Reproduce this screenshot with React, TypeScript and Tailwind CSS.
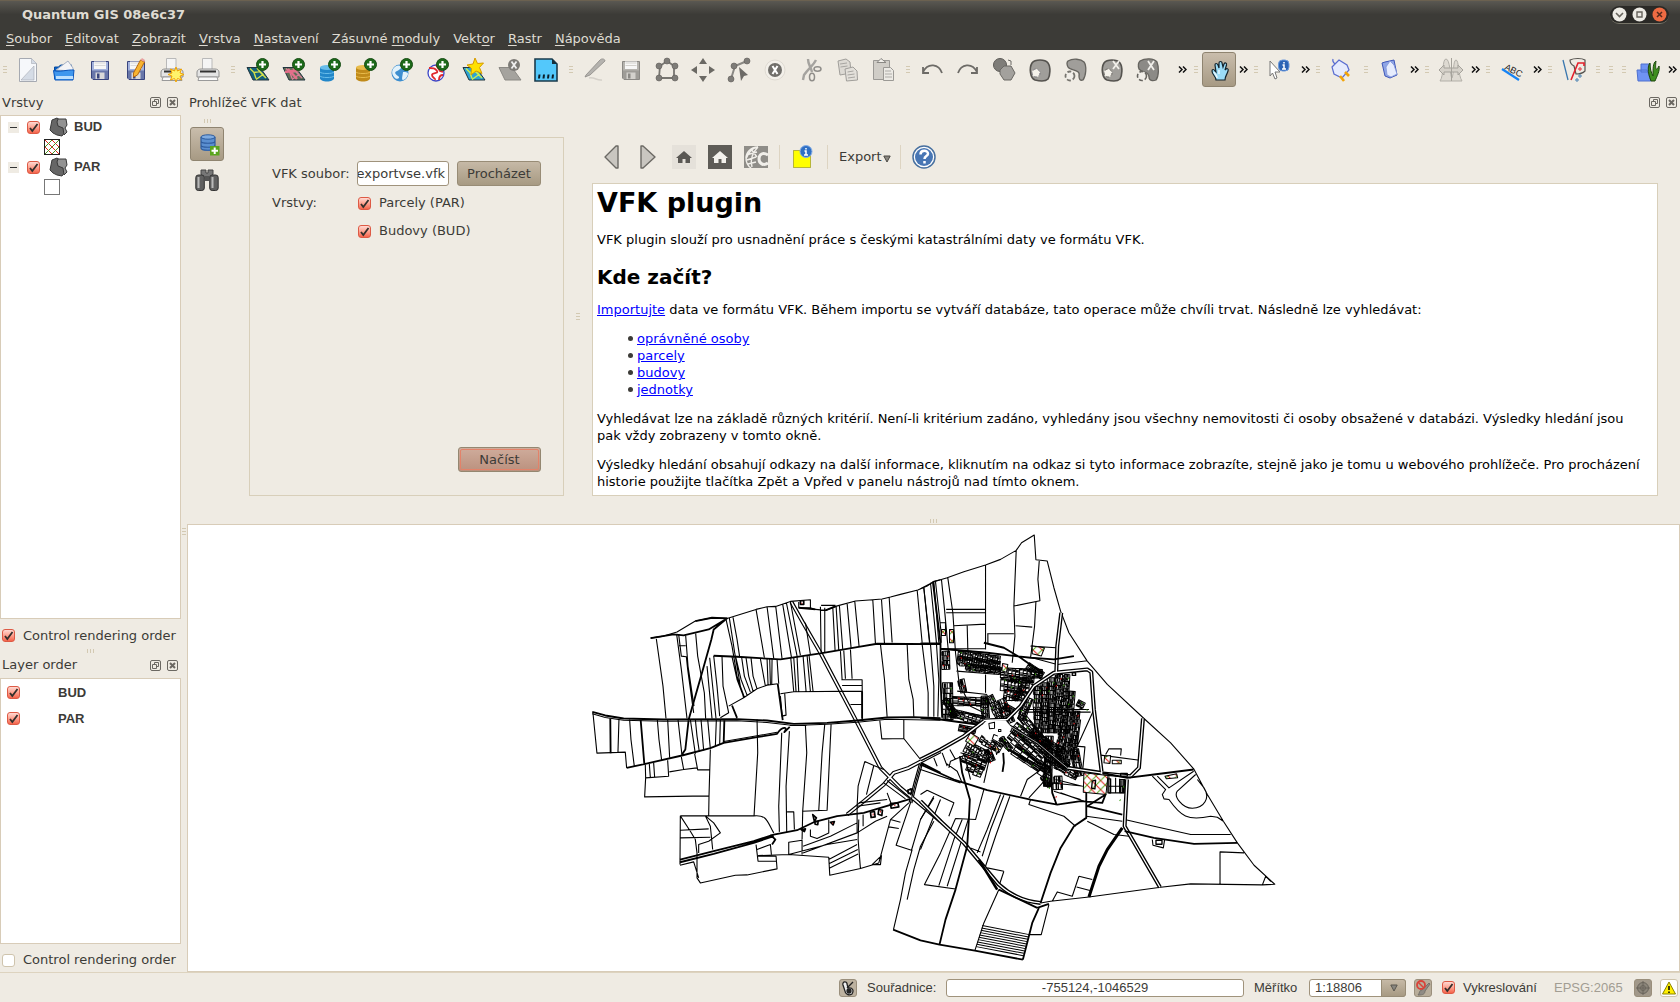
import React from "react";

type Kids = { children?: React.ReactNode };

/* ---------- small shared parts ---------- */

function Grip({ vertical = false, width = "w-3" }: { vertical?: boolean; width?: string }) {
  return vertical ? (
    <span className={width + " flex shrink-0 flex-col items-center gap-[2px] self-center"}>
      <i className="h-px w-1 bg-[#d3c9b2]" />
      <i className="h-px w-1 bg-[#d3c9b2]" />
      <i className="h-px w-1 bg-[#d3c9b2]" />
    </span>
  ) : (
    <span className="flex h-1 justify-center gap-[2px]">
      <i className="h-1 w-px bg-[#d3c9b2]" />
      <i className="h-1 w-px bg-[#d3c9b2]" />
      <i className="h-1 w-px bg-[#d3c9b2]" />
    </span>
  );
}

function Check({ id, checked = true, label }: { id: string; checked?: boolean; label?: string }) {
  return (
    <span className="relative inline-flex size-[13px] shrink-0">
      <input
        id={id}
        type="checkbox"
        defaultChecked={checked}
        aria-label={label}
        className="peer size-[13px] appearance-none rounded-[3px] border border-[#cfc4ad] bg-white checked:border-[#dd5a45] checked:bg-gradient-to-b checked:from-[#ffd9d2] checked:to-[#f4634a]"
      />
      <svg viewBox="0 0 13 13" className="pointer-events-none absolute inset-0 hidden size-[13px] peer-checked:block">
        <path d="M3 7 5.3 10 10.5 3" fill="none" stroke="#33302c" strokeWidth="1.8" />
      </svg>
    </span>
  );
}

function DockHeader({ title }: { title: string }) {
  return (
    <div className="flex h-6 items-center justify-between pr-[3px] pb-px pl-[2px]">
      <h2>{title}</h2>
      <span className="flex gap-[6px]">
        <button type="button" aria-label="Float" className="size-[11px]">
          <svg viewBox="0 0 11 11" className="size-[11px]" fill="none" stroke="#6b6862">
            <rect x=".5" y=".5" width="10" height="10" rx="1.5" />
            <path d="M4.5 4.5v-2h4v4h-2M2.5 4.5h4v4h-4z" />
          </svg>
        </button>
        <button type="button" aria-label="Close" className="size-[11px]">
          <svg viewBox="0 0 11 11" className="size-[11px]" fill="none" stroke="#6b6862">
            <rect x=".5" y=".5" width="10" height="10" rx="1.5" />
            <path d="m3 3 5 5M8 3 3 8" strokeWidth="2" />
          </svg>
        </button>
      </span>
    </div>
  );
}

function Svg({ children }: Kids) {
  return (
    <svg viewBox="0 0 24 24" className="size-6 overflow-visible" fill="none">
      {children}
    </svg>
  );
}

function Tool({ label, children, wide = true }: Kids & { label: string; wide?: boolean }) {
  return (
    <button type="button" aria-label={label} className={wide ? "flex w-9 shrink-0 items-center justify-center" : "flex w-[35px] shrink-0 items-center justify-center"}>
      <Svg>{children}</Svg>
    </button>
  );
}

function More() {
  return (
    <button type="button" aria-label="More" className="flex w-[14px] shrink-0 items-center justify-center">
      <svg viewBox="0 0 9 7" className="h-[7px] w-[9px]" fill="none" stroke="#111" strokeWidth="1.5">
        <path d="m1 .5 3 3-3 3M5 .5l3 3-3 3" />
      </svg>
    </button>
  );
}

/* ---------- icon drawings ---------- */

const Plus = () => (
  <g>
    <circle cx="16.5" cy="6.5" r="6" fill="#1d6a1a" stroke="#174d14" />
    <path d="M16.5 3v7M13 6.5h7" stroke="#fff" strokeWidth="2.2" />
  </g>
);

const Printer = () => (
  <g>
    <path d="M6.500 12V.5h9.500V12" fill="#f5f5f5" stroke="#b9b9b9" />
    <path d="M1 14c0-2 2-3 4-3h14c2 0 4 1 4 3v5H1z" fill="#e4e4e4" stroke="#8f8f8f" />
    <path d="M4 13.500h16" stroke="#333" strokeWidth="2" />
    <path d="M3 19h18l1 3.500H2z" fill="#fafafa" stroke="#9a9a9a" />
  </g>
);

const Floppy = ({ a = "#39457e", b = "#a3b2dd", c = "#d9d9d9" }: { a?: string; b?: string; c?: string }) => (
  <g>
    <path d="M3.500 3.500h17v18H5l-1.500-1.500z" fill={b} stroke={a} />
    <path d="M4 12.500h16v8.500H5.500L4 19.500z" fill={a} opacity=".55" />
    <path d="M6 3.500h12v7.500H6z" fill="#f7f7f7" />
    <path d="M6.500 5h11M6.500 7.500h11" stroke={c} />
    <path d="M7.500 14.500h9v6.500h-9z" fill={c} />
    <path d="M9 15.500h2.500v5H9z" fill={a} />
  </g>
);

const Map = ({ fill, line }: { fill: string; line: string }) => (
  <g>
    <path d="M1 9.500h13l9 12.500H7z" fill={fill} stroke="#21343f" strokeWidth="1" />
    <path d="m4 10.500 4 4 6-1 3 3-7 5M8 14.500l2 6M11 10l3 4 6 6" stroke={line} strokeWidth="1.4" />
  </g>
);

const Cylinder = ({ a, b }: { a: string; b: string }) => (
  <g>
    <path d="M2 9.500v11c0 1.500 3 3 7 3s7-1.500 7-3v-11" fill={a} />
    <ellipse cx="9" cy="9.500" rx="7" ry="2.500" fill={b} />
    <path d="M2 14c1 2 13 2 14 0M2 18c1 2 13 2 14 0" stroke={b} />
  </g>
);

const Nodes = ({ pts }: { pts: [number, number][] }) => (
  <g fill="#7e7c78">
    {pts.map(([x, y], i) => (
      <circle key={i} cx={x} cy={y} r="3" stroke="#5f5d59" strokeWidth=".6" />
    ))}
  </g>
);

const Blob = () => <path d="M4 5C7 1 17 1 20 5c3 4 2 13 0 16-3 3-9 2-13 1-5-2-6-12-3-17z" fill="#a09e9a" stroke="#55534f" strokeWidth="1.6" />;

const HomeShape = ({ color }: { color: string }) => (
  <path d="m12 6 8 7h-2v5h-4.500v-4h-3v4H6v-5H4z" fill={color} />
);

function MainToolbar() {
  return (
    <div role="toolbar" aria-label="Main" className="flex h-[41px] shrink-0 items-stretch overflow-hidden pb-[2px]">
      <Grip vertical width="w-[10px]" />
      <Tool label="New project">
        <path d="M3.500.5h12l5 5v18h-17z" fill="#f6f8fb" stroke="#a6aab2" />
        <path d="M15.500.5v5h5M5 22 18 8v14z" fill="#d5dce6" stroke="#a6aab2" strokeWidth=".6" />
      </Tool>
      <Tool label="Open project">
        <path d="M2.500 21V9h4l2-2h11v4" fill="#0a62c9" stroke="#074a9e" />
        <path d="m4 12 12-9 5 7v3z" fill="#f4f4f6" stroke="#a6b1c4" />
        <path d="M1.500 12.500c5 2 14-1 20.500-.5l-1 10H3z" fill="#3f97ee" stroke="#0a55bb" />
        <path d="M4 18h17v3H4z" fill="#bde0ff" />
      </Tool>
      <Tool label="Save project"><Floppy /></Tool>
      <Tool label="Save project as">
        <Floppy />
        <path d="m9.500 15 7-13 4 2-7 13-4 2z" fill="#f7b431" stroke="#b86a11" />
        <path d="m16.500 2 4 2 .5-2-3-2z" fill="#e8a0a0" />
      </Tool>
      <Tool label="New print composer">
        <Printer />
        <path d="m16 9 1.500 4 4-2-1.500 4 4 1.500-4 1.500 1.500 4-4-1.500L16 24l-1.500-3.500-4 1.500 1.500-4-4-1.500 4-1.500-1.500-4 4 2z" fill="#fff36b" stroke="#f1a200" />
      </Tool>
      <Tool label="Composer manager"><Printer /></Tool>
      <Grip vertical width="w-[14px]" />
      <Tool label="Add vector layer"><Map fill="#13617c" line="#d6e04a" /><Plus /></Tool>
      <Tool label="Add raster layer">
        <Map fill="#5d6d55" line="#d77e96" />
        <path d="m6 11 9 10M3 14l14-2" stroke="#e56f8a" strokeWidth="2.500" />
        <Plus />
      </Tool>
      <Tool label="Add PostGIS layer"><Cylinder a="#2287c9" b="#68bdea" /><Plus /></Tool>
      <Tool label="Add SpatiaLite layer"><Cylinder a="#c08a1a" b="#e8bb4b" /><Plus /></Tool>
      <Tool label="Add WMS layer">
        <circle cx="10" cy="15" r="8.500" fill="#3e8fd0" />
        <path d="M3 11c4-5 6-3 8-3s-1 4-4 5-2 3 1 5-1 4-3 2-4-5-2-9zM13 14c2 0 5 0 5 2s-3 6-5 6 0-6 0-8z" fill="#e2f2fb" />
        <Plus />
      </Tool>
      <Tool label="Add WFS layer">
        <circle cx="10" cy="15" r="8" fill="#fff" stroke="#3d47c8" strokeWidth="1.300" />
        <path d="M3 10c4 0 6 0 8 3s-5 1-5 4 4 3 3 5M10 7l4 6 3 1M13 22c0-3 1-5 4-5" stroke="#e0272d" strokeWidth="1.800" />
        <Plus />
      </Tool>
      <Tool label="New shapefile">
        <Map fill="#2da4d4" line="#c8ee52" />
        <path d="m13 0 2.500 5.500 6-.5-4 4.500 2.500 6-6-2.500-5 4 .500-6.500L5 7l6-1z" fill="#ffe100" stroke="#d79a00" />
      </Tool>
      <Tool label="Remove layer">
        <path d="M1 9.500h13l9 12.500H7z" fill="#a5a39e" stroke="#8b8984" />
        <circle cx="16" cy="7" r="6" fill="#7c7a76" />
        <path d="m13.500 3.500 5 7M18.500 3.500l-5 7" stroke="#eee" strokeWidth="1.800" />
      </Tool>
      <Tool label="GPS">
        <path d="M1 1h17l5 5v17H1z" fill="#53c8fb" stroke="#1b3b4c" strokeWidth="1.600" />
        <path d="M18 1v5h5z" fill="#16303d" />
        <path d="M5.500 16.500 5 20.500M10 16.500l-.5 4M14.500 16.500l-.5 4M19 16.500l-.5 4" stroke="#0b1d27" strokeWidth="2" />
      </Tool>
      <Grip vertical width="w-[13px]" />
      <Tool label="Toggle editing">
        <path d="M3 17 17 2c2-2 5-1 5 1L7 17l-5 2z" fill="#b5b3af" stroke="#8b8985" strokeWidth=".8" />
        <path d="M6 20c6-1 8 3 13 2" stroke="#d4d0c9" strokeWidth="1.500" />
      </Tool>
      <Tool label="Save edits"><Floppy a="#8b8985" b="#b5b3ae" c="#d3d1cc" /></Tool>
      <Tool label="Capture polygon">
        <path d="m12 3 7 5v12H4l1-12z" stroke="#777570" strokeWidth="1.800" />
        <Nodes pts={[[12, 3], [20, 8], [20, 20], [4, 20], [4, 8]]} />
      </Tool>
      <Tool label="Move feature">
        <path d="m12 0 4 6H8zM12 24l4-6H8zM0 12l6-4v8zM24 12l-6-4v8z" fill="#6b6964" />
      </Tool>
      <Tool label="Node tool">
        <path d="M4 21 8 8l12-5" stroke="#8a8884" strokeWidth="2" />
        <Nodes pts={[[4, 21], [7, 8], [20, 3]]} />
        <path d="m12 9 9 8-4 1-3 5z" fill="#6d6b67" />
      </Tool>
      <Tool label="Delete selected">
        <circle cx="12" cy="12" r="10" fill="#f3f0ea" stroke="#dedad2" />
        <circle cx="12" cy="12" r="7" fill="#706e6a" />
        <path d="m9.500 8 5 8M14.500 8l-5 8" stroke="#fff" strokeWidth="2" />
      </Tool>
      <Tool label="Cut">
        <path d="M9 1c0 6 3 8 4 13M17 2c-3 6-7 8-12 15L4 22" stroke="#a5a39f" strokeWidth="2.400" />
        <ellipse cx="13" cy="19" rx="2.500" ry="3.800" stroke="#8f8d89" strokeWidth="1.500" />
        <ellipse cx="18.500" cy="11" rx="3.500" ry="2.200" stroke="#8f8d89" strokeWidth="1.500" />
      </Tool>
      <Tool label="Copy">
        <path d="m3 3 8-2 4 3 1 11-11 2z" fill="#dddad4" stroke="#a09e9a" />
        <path d="m10 11 8-2 4 4 .500 9-11 1z" fill="#e3e0da" stroke="#a09e9a" />
        <path d="m5 6 7-1M5.500 9l7-1M12.500 14l6-1M12.500 17l7-1M13 20l7-1" stroke="#a8a6a2" />
      </Tool>
      <Tool label="Paste">
        <path d="M2.500 2.500h16v19h-16z" fill="#d0cdc7" stroke="#9b9995" />
        <path d="M6 4.500 10 .5l5 4z" fill="#f1efea" stroke="#8a8884" />
        <path d="M12.500 9.500h7l3 3v10h-10z" fill="#eceae5" stroke="#9b9995" />
        <path d="M14 13h6M14 16h7M14 19h7" stroke="#aeaca8" />
      </Tool>
      <Grip vertical width="w-[13px]" />
      <Tool label="Undo">
        <path d="M22 15C19 6 8 4 3 14M3 9v6h6" stroke="#6d6b67" strokeWidth="1.800" />
      </Tool>
      <Tool label="Redo">
        <path d="M2 15C5 6 16 4 21 14M21 9v6h-6" stroke="#6d6b67" strokeWidth="1.800" />
      </Tool>
      <Tool label="Simplify feature">
        <circle cx="8" cy="7" r="6.500" fill="#7f7d79" stroke="#5d5b57" />
        <path d="m8 12 4-4h7l4 7-4 7h-7l-4-6z" fill="#a3a19d" stroke="#6a6864" />
        <path d="m16 2 3 1v4" stroke="#6a6864" />
      </Tool>
      <Tool label="Add ring"><Blob /><circle cx="8" cy="15" r="4" fill="#f4f1ea" stroke="#77757c" strokeDasharray="3 2" /></Tool>
      <Tool label="Add part">
        <path d="M4 3c5-3 13-2 16 1 3 4 2 14-1 18-3 1-4-1-4-4 2-7-9-5-11-9-1-2-2-4 0-6z" fill="#a09e9a" stroke="#66645f" strokeWidth="1.300" />
        <circle cx="6" cy="18" r="4.500" fill="#f1eee8" stroke="#77756f" strokeWidth="1.800" strokeDasharray="4 2" />
      </Tool>
      <Tool label="Delete ring">
        <Blob />
        <path d="m13 3 6 8M19 3l-6 8" stroke="#f1efea" strokeWidth="1.800" />
        <circle cx="8" cy="15" r="4" fill="#f4f1ea" stroke="#66645f" strokeDasharray="3 2" />
      </Tool>
      <Tool label="Delete part">
        <path d="M4 3c5-3 14-3 17 1 2 5 2 14-1 18-3 1-7 1-7-3 0-6-7-4-10-8-1-3-1-6 1-8z" fill="#8c8a86" stroke="#66645f" strokeWidth="1.300" />
        <path d="m12 3 6 9M18 3l-6 9" stroke="#f1efea" strokeWidth="1.800" />
        <circle cx="6" cy="18" r="4.500" fill="#f1eee8" stroke="#66645f" strokeWidth="1.600" strokeDasharray="4 2" />
      </Tool>
      <span className="w-[9px] shrink-0" />
      <More />
      <Grip vertical width="w-[13px]" />
      <button type="button" aria-label="Pan map" aria-pressed="true" className="my-[2px] flex w-[34px] shrink-0 items-center justify-center rounded-[3px] border border-[#8f8470] bg-gradient-to-b from-[#c9bdac] to-[#a79a84] pl-[2px]">
        <Svg>
          <path d="M8 22c0-4-4-5-4-9 0-2 2-2 3 0l1 1-1-7c0-2 2-2 3 0l1 3V5c0-2 3-2 3 0l1 4 1-3c1-2 3-1 2.500 1L17 12l1-1c1-1 3 0 2 2-1 4-3 5-3 9z" fill="#9bdcf7" stroke="#13232c" strokeWidth="1.200" />
          <path d="M9 20c0-3-3-5-3-6M11 12v4" stroke="#e5f7ff" strokeWidth="1.500" />
        </Svg>
      </button>
      <More />
      <Grip vertical />
      <Tool label="Identify">
        <path d="m2 3 10 11-5 0 2 6-2 1-2.500-6L2 18z" fill="#fff" stroke="#777" />
        <rect x="10.500" y="2" width="10.500" height="11" rx="4" fill="#2c64b5" stroke="#6f9bdc" />
        <path d="M16 4v1.500M14.500 7H16v4M14 11h4" stroke="#fff" strokeWidth="1.500" />
      </Tool>
      <More />
      <Grip vertical />
      <Tool label="Plugins">
        <path d="M3 1c-1 3 1 4 2 5M2 9l7-7 8 5 2 5-7 8-8-4z" fill="#e6ebfd" stroke="#5a6dd0" strokeWidth="1.200" />
        <path d="m15 14 4 4M10 18l4 5" stroke="#f2a408" strokeWidth="2.600" />
      </Tool>
      <Grip vertical />
      <Tool label="Help contents" wide={false}>
        <path d="m4 5 3-1 9-2 3 15-7 3-5-2z" fill="#8fa5e5" stroke="#3f57b8" />
        <path d="m9 17-1-8 4-6 4 4 3 9-6 3z" fill="#e6ecfd" stroke="#8296da" strokeWidth=".8" />
      </Tool>
      <More />
      <Grip vertical />
      <Tool label="Histogram stretch" wide={false}>
        <path d="M1 23C5 18 3 1 7 1s4 17 6 19c2-4 1-18 4-18s2 15 6 21z" fill="#dedad2" stroke="#b3b0a9" />
        <path d="m0 12 5-5v3h14V7l5 5-5 5v-3H5v3z" fill="#d5d1c9" stroke="#a5a29b" />
        <path d="M12.500 0v23" stroke="#a5a29b" />
      </Tool>
      <More />
      <Grip vertical />
      <Tool label="Labeling">
        <path d="m2 11 17 11" stroke="#1683f5" strokeWidth="2.200" />
        <text x="4" y="11" fontSize="9" fill="#222" fontFamily="Liberation Sans, sans-serif" transform="rotate(27 4 11)">ABC</text>
      </Tool>
      <More />
      <Grip vertical />
      <Tool label="Topology checker">
        <path d="m1 2 5 20M6 22" stroke="#3b78ae" strokeWidth="1.300" />
        <path d="M8 2c4-2 12-2 15 0v11c-3 3-6 3-9 3l-2-8c-2-1-4-3-4-6z" stroke="#55534f" strokeWidth="1.200" />
        <path d="m9 22 7-17h6v3" stroke="#e3202b" strokeWidth="1.600" />
        <circle cx="18" cy="11" r="1.200" stroke="#e3202b" />
        <circle cx="18" cy="18" r="1.200" stroke="#3b78ae" />
        <circle cx="15" cy="22" r="1.200" stroke="#3b78ae" />
      </Tool>
      <Grip vertical />
      <Grip vertical width="w-[13px]" />
      <Grip vertical width="w-[13px]" />
      <Tool label="GRASS" wide={false}>
        <path d="M5 6h9v8H5zM1 12h10l4 11H2z" fill="#6f93f3" stroke="#4e70cf" />
        <path d="M15 23C11 13 12 7 14 5c0 6 1 9 3 13 0-8 0-13 3-15-1 8 0 11 3 5 1 5-2 10-4 15z" fill="#3f8e1f" stroke="#1d470e" />
      </Tool>
      <More />
    </div>
  );
}

/* ---------- layer panels ---------- */

function LayerGlyph() {
  return (
    <svg viewBox="0 0 20 20" className="size-5" stroke="#3a3a3a" strokeWidth="1">
      <path d="M4 3 9 1l4 3-2 4 5 1 1 6-3 4-5-1-4-2-3-3z" fill="#666" />
      <path d="m10 2 8 0 1 6-2 3 2 4-3 3-1-7-5-2-1-4z" fill="#929292" />
    </svg>
  );
}

function LayerNode({ name, hatched }: { name: string; hatched: boolean }) {
  return (
    <li>
      <div className="flex h-5 items-center">
        <button type="button" aria-label={"Collapse " + name} className="ml-[7px] flex size-[11px] items-center justify-center bg-[#efebe3]">
          <i className="h-px w-[7px] bg-[#333]" />
        </button>
        <span className="ml-2 flex"><Check id={"tree-" + name} label={name} /></span>
        <span className="ml-2 flex"><LayerGlyph /></span>
        <span className="ml-[6px] font-['Liberation_Sans',sans-serif] font-bold">{name}</span>
      </div>
      <div className="flex h-5 items-center pl-[43px]">
        <svg viewBox="0 0 16 16" className="size-4" fill="none">
          <rect x=".5" y=".5" width="15" height="15" fill="#fff" stroke={hatched ? "#222" : "#777"} />
          {hatched && <path d="m1 8 7 7M1 1l14 14M8 1l7 7" stroke="#e0291c" />}
          {hatched && <path d="m8 1-7 7M15 1 1 15M15 8l-7 7" stroke="#4d8f1f" />}
        </svg>
      </div>
    </li>
  );
}

function LeftDock() {
  return (
    <aside className="flex w-[187px] shrink-0">
      <div className="flex min-w-0 flex-1 flex-col">
        <DockHeader title="Vrstvy" />
        <ul className="flex-[504_1_0] border border-[#d8ccb8] bg-white pt-px">
          <LayerNode name="BUD" hatched />
          <LayerNode name="PAR" hatched={false} />
        </ul>
        <div className="flex h-[30px] items-center gap-2 pt-1 pl-[2px]">
          <Check id="order-a" />
          <label htmlFor="order-a" className="whitespace-nowrap">Control rendering order</label>
        </div>
        <Grip />
        <div className="pt-px"><DockHeader title="Layer order" /></div>
        <ul className="flex-[265_1_0] border border-[#d8ccb8] bg-white pt-px">
          {["BUD", "PAR"].map((n) => (
            <li key={n} className="flex h-[26px] items-center gap-[38px] pl-[6px]">
              <Check id={"order-" + n} />
              <label htmlFor={"order-" + n} className="font-['Liberation_Sans',sans-serif] font-bold">{n}</label>
            </li>
          ))}
        </ul>
        <div className="flex h-7 items-center gap-2 pt-1 pl-[2px]">
          <Check id="order-b" checked={false} />
          <label htmlFor="order-b" className="whitespace-nowrap">Control rendering order</label>
        </div>
      </div>
      <div className="flex w-[6px] justify-center overflow-hidden"><Grip vertical /></div>
    </aside>
  );
}

/* ---------- VFK browser ---------- */

function VfkForm() {
  return (
    <form className="mt-[22px] flex w-[315px] shrink-0 flex-col justify-between border border-[#d8cfba] px-[22px] pt-[23px] pb-[23px]" onSubmit={(e) => e.preventDefault()}>
      <div>
        <div className="flex items-center">
          <label htmlFor="vfk-file" className="w-[85px] whitespace-nowrap">VFK soubor:</label>
          <input id="vfk-file" dir="rtl" defaultValue="exportvse.vfk" className="h-[25px] w-[92px] rounded-[3px] border border-[#a0937c] bg-white pr-[3px]" />
          <button type="button" className="ml-2 h-[25px] flex-1 rounded-[3px] border border-[#988c76] bg-gradient-to-b from-[#c6b9a6] to-[#a79a83]">Procházet</button>
        </div>
        <fieldset className="mt-[3px] flex">
          <legend className="float-left h-7 w-[86px] leading-7">Vrstvy:</legend>
          <div>
            <div className="flex h-7 items-center gap-2"><Check id="lay-par" /><label htmlFor="lay-par">Parcely (PAR)</label></div>
            <div className="flex h-7 items-center gap-2"><Check id="lay-bud" /><label htmlFor="lay-bud">Budovy (BUD)</label></div>
          </div>
        </fieldset>
      </div>
      <button type="submit" className="h-[25px] w-[83px] self-end rounded-[3px] border border-[#948771] bg-gradient-to-b from-[#cfac9c] to-[#bb917e] p-px">
        <span className="flex h-full items-center justify-center rounded-[2px] border border-[#e38269]">Načíst</span>
      </button>
    </form>
  );
}

const Sep = () => <span className="h-6 w-px bg-[#ddd4c2]" />;

function VfkBrowser() {
  return (
    <section className="mt-[22px] mr-[22px] flex min-w-0 flex-1 flex-col">
      <div role="toolbar" aria-label="Browser" className="mb-[6px] flex h-10 items-stretch pl-[2px]">
        <Tool label="Back"><path d="M18 1v22h-2L5 12 16 1z" fill="#c9c6c0" stroke="#6b6964" strokeWidth="1.400" strokeLinejoin="round" /></Tool>
        <Tool label="Forward"><path d="M5 1v22h2l12-11L7 1z" fill="#c9c6c0" stroke="#6b6964" strokeWidth="1.400" strokeLinejoin="round" /></Tool>
        <Tool label="Home"><path d="M0 0h24v24H0z" fill="#e5e1da" /><HomeShape color="#5a5854" /></Tool>
        <Tool label="Home page"><path d="M0 0h24v24H0z" fill="#5e5c57" /><HomeShape color="#f3f1ec" /></Tool>
        <Tool label="Cadastre">
          <path d="M0 1h24v22H0z" fill="#8f8d88" />
          <path d="M14 2C6 2 2 8 2 13s2 8 5 10M14 2c-5 5-8 12-6 20M14 2c-8 1-10 8-12 12M2 10l11-3M3 15l9-3M4 19l8-2M7 4l6 8" stroke="#f1efea" strokeWidth="1.400" />
          <path d="M24 10c-5-3-9-1-9 4s5 7 9 4" stroke="#f1efea" strokeWidth="3" />
        </Tool>
        <span className="flex w-[11px] items-center justify-center"><Sep /></span>
        <Tool label="Select in map">
          <path d="M2.500 5.500h17v17h-17z" fill="#ffff00" stroke="#777700" strokeDasharray="1 1" />
          <circle cx="15" cy="6.500" r="6" fill="#2f6fc4" stroke="#85aee6" />
          <path d="M15 3v1.500M13.500 6H15v4M13 10h4" stroke="#fff" strokeWidth="1.500" />
        </Tool>
        <span className="flex w-[13px] items-center justify-center"><Sep /></span>
        <button type="button" className="flex items-center gap-px px-[5px]">
          Export
          <svg viewBox="0 0 8 8" className="mt-[3px] size-2"><path d="M.8 1h6.400L4 7z" fill="#8a8780" stroke="#4a4843" /></svg>
        </button>
        <span className="flex w-[10px] items-center justify-center"><Sep /></span>
        <Tool label="Help">
          <circle cx="12" cy="12" r="11" fill="#fff" stroke="#48709f" strokeWidth="1.500" />
          <circle cx="12" cy="12" r="9" fill="#4876b4" />
          <path d="M8.500 9.500c0-5 7.500-4.500 7.500-.8 0 2.500-3.500 2.300-3.500 5.300M12.500 16v2.500" stroke="#fff" strokeWidth="2.500" />
        </Tool>
      </div>
      <article className="flex-1 border border-[#d8cfba] bg-white pt-1 pr-[10px] pb-[5px] pl-1 leading-[17px] text-black">
        <h1 className="text-[27px] leading-[30px] font-bold">VFK plugin</h1>
        <p className="mt-[13px]">VFK plugin slouží pro usnadnění práce s českými katastrálními daty ve formátu VFK.</p>
        <h2 className="mt-[17px] text-[20px] leading-6 font-bold">Kde začít?</h2>
        <p className="mt-3"><a href="#import" className="text-[#0000ff] underline">Importujte</a> data ve formátu VFK. Během importu se vytváří databáze, tato operace může chvíli trvat. Následně lze vyhledávat:</p>
        <ul className="mt-3 pl-10">
          {["oprávněné osoby", "parcely", "budovy", "jednotky"].map((t) => (
            <li key={t} className="relative before:absolute before:top-[6px] before:-left-[9px] before:size-[5px] before:rounded-full before:bg-[#3c3b37]"><a href="#hledat" className="text-[#0000ff] underline">{t}</a></li>
          ))}
        </ul>
        <p className="mt-3">Vyhledávat lze na základě různých kritérií. Není-li kritérium zadáno, vyhledány jsou všechny nemovitosti či osoby obsažené v databázi. Výsledky hledání jsou pak vždy zobrazeny v tomto okně.</p>
        <p className="mt-3">Výsledky hledání obsahují odkazy na další informace, kliknutím na odkaz si tyto informace zobrazíte, stejně jako je tomu u webového prohlížeče. Pro procházení historie použijte tlačítka Zpět a Vpřed v panelu nástrojů nad tímto oknem.</p>
      </article>
    </section>
  );
}

function VfkDock() {
  return (
    <div className="shrink-0">
      <DockHeader title="Prohlížeč VFK dat" />
      <div className="flex">
        <div className="flex w-[62px] shrink-0 flex-col items-start pl-[3px]">
          <span className="flex w-[34px] justify-center pt-1 pb-1"><Grip /></span>
          <button type="button" aria-label="Import" aria-pressed="true" className="flex size-[34px] items-center justify-center rounded-[3px] border border-[#8f8470] bg-gradient-to-b from-[#c9bdac] to-[#a79a84] pt-[2px] pl-px">
            <Svg>
              <path d="M5 4v11c0 4 14 4 14 0V4" fill="#5b8fd0" />
              <ellipse cx="12" cy="4" rx="7" ry="2.200" fill="#7fabe0" stroke="#2e5c9e" />
              <path d="M5 8c0 3 14 3 14 0M5 12c0 3 14 3 14 0M5 4v11c0 3 14 3 14 0V4" stroke="#2e5c9e" strokeWidth="1.200" />
              <path d="M14 13h9.500v9.500H14z" fill="#5aa51d" />
              <path d="M18.700 14.500v6.500M15.500 17.700h6.500" stroke="#fff" strokeWidth="2" />
            </Svg>
          </button>
          <button type="button" aria-label="Search" className="flex h-[38px] w-[34px] items-center justify-center">
            <Svg>
              <path d="M6 2h5v3h2V2h5v4l-2 4H8L6 6z" fill="#777" stroke="#444" />
              <rect x=".8" y="7" width="8.500" height="15.500" rx="2.500" fill="#606060" stroke="#333" />
              <rect x="14.700" y="7" width="8.500" height="15.500" rx="2.500" fill="#606060" stroke="#333" />
              <path d="M3.500 9v11M17.500 9v11" stroke="#b9b9b9" strokeWidth="2" />
              <path d="M9.500 8h5v5h-5z" fill="#555" />
            </Svg>
          </button>
        </div>
        <VfkForm />
        <div className="mt-[22px] flex w-7 shrink-0 items-center justify-center"><Grip vertical /></div>
        <VfkBrowser />
      </div>
      <div className="flex h-7 items-end justify-center pb-px"><Grip /></div>
    </div>
  );
}

/* ---------- cadastral map ---------- */

const WEST_THIN = [
  "M211 356 250 350 290 338 345 305 395 295 440 297 527 270 560 262 586 261 630 246 690 241 690 265 705 270 735 273 765 261 825 245 877 241 905 239 930 233 960 225 1012 212 1040 200 1060 186 1080 181",
  "M228 358 248 500 257 597M289 345 303 450 320 597M295 345 303 410 318 412 322 450 340 580M296 379H316M316 348 323 440 341 560M346 342 352 410 372 520 376 598M380 440 395 597M388 415 407 597",
  "M38 580 50 701 135 698 139 745M116 600 113 698M148 600 152 660 162 740M231 600 236 660 244 722M262 600 268 715M293 600 305 708M330 600 345 703M345 600 350 650 357 697M362 600 370 693M382 600 390 688M408 600 405 680M420 600 418 675",
  "M195 735 196 775 193 832 386 829 390 690M196 775 265 770 262 722M207 733 210 773M220 730 223 773M267 757 310 750 350 745M303 712 310 750M343 703 352 751H388M386 829 385 889",
  "M530 600 532 700 521 889M604 640 595 860 597 937M627 635 617 800 619 937M675 618 679 700 667 873 665 960M733 614 725 700 715 873M752 614 740 872 665 875M620 877H640L642 930M628 618H678",
  "M437 300 455 380 470 470 490 535M447 296 463 400 480 500 492 533M458 294 470 360 478 413M527 270 552 415M560 262 580 417M586 261 605 418M607 255 633 413M618 250 650 410M630 247 660 408M675 310 690 406M720 262 722 400M733 265V398M757 262 764 394M767 260 775 392M777 260 787 391M800 252 812 386M823 246 836 382M877 241 885 373M903 239 912 371M926 233 935 369M1010 212 1025 370M1030 206 1047 370M1050 190 1068 372M1060 187 1075 370M722 258H765M655 248V265H690",
  "M425 412 428 500 445 580 420 595M455 412 470 480 490 533M466 412 482 480 500 527M484 415 492 470 510 518M497 415 505 470 518 515M512 416 518 470 530 508M540 418 555 500M560 418 563 496M568 419 570 495M575 419 574 495M590 420 595 493M445 560 490 535 530 508 560 497 592 493M400 409 410 500 418 590",
  "M600 523 640 517 845 515M600 530 605 590 617 587 613 523M631 415 640 517M640 414 647 517M650 413 655 517M668 410 677 516M680 408 690 516M686 408 698 516",
  "M780 395 785 480M790 393 795 478M810 390 815 478M783 481H845L846 598M785 498H845M810 555H845M900 375 912 480 920 592M980 375 985 480 998 540 1000 592M1025 375 1043 520V592M1050 375 1060 500V592M1068 375 1075 480 1072 592",
  "M898 603 904 658 970 657V600M970 657 1020 720M853 726 833 800 830 860V940M853 726 880 738 910 750M880 738 858 825M910 790 975 838M920 783 985 835M1022 730 1005 790 990 850 947 977 993 992 1020 900 1060 835",
  "M300 889H520C560 885 560 905 580 940M300 889 299 1035M300 932 385 928M300 955 390 953M300 889 330 935 345 960 350 1000V1075L360 1090 465 1067 500 1066 590 1048 587 1010H533M375 889 400 910 420 940 385 965 355 975V1000M375 889 390 920 397 990M299 1037 340 1027 355 1075",
  "M527 975 533 1025H587M530 990 570 975 573 1005M533 1008 625 1005 745 1013 748 1067 840 1047 895 1030 930 900 985 850M625 1005V968L665 962V1005M668 980 750 950 830 910M668 1000 830 940 885 905 920 890M745 1020 830 975M747 1032 832 990M748 1045 833 1003M835 900 833 960 840 1047M848 885V920M625 1005 740 975 830 960M690 930V950L710 957 745 940V900M930 900 960 908M925 922 955 927",
  "M995 990 975 1060 960 1140 939 1230M1060 905 1020 980 1000 1050 980 1140M830 860 900 850M835 850 920 840M920 820 935 860M900 1035 875 1035 903 1008z",
];
const WEST_BOLD = [
  "M211 356 280 345 310 348 385 330 405 318 440 297 400 330 393 360 365 460 325 600 315 690 305 705",
  "M36 577 75 588 130 597 250 600 470 599 560 603 640 613 740 610 830 603 920 594 1000 593 1080 596",
  "M139 745 195 733 305 708 390 686 430 670 530 653 590 643C605 620 625 620 612 638L628 622M90 597 91 701M181 600 192 733M432 603 430 668",
  "M400 409 470 412 600 420 720 402 830 383 890 373 1080 374M592 493 607 602M455 558 470 595M655 265 705 270M735 273 765 261",
  "M1022 730 1080 760M299 1020 400 995 520 965 580 945 650 932 700 908 770 890 850 880 900 865 990 838",
  "M299 1028 400 1003 520 970 580 950M570 945 585 960 575 975M845 515V598M345 305 395 295 440 297",
];
const EAST_THIN = [
  "M0 208 40 187 80 175 130 157 195 137 240 120 287 93 303 70 341 47 346 121 380 125 400 205 420 275 445 340 500 425 560 495 670 597 750 670 819 748 860 825 908 905 950 970 1000 1037 1062 1094 1025 1096 810 1093 720 1103 505 1132 390 1145 360 1150",
  "M287 93 280 260 283 350 275 430M195 137V390M356 125 352 180 358 244 280 260M346 248 342 320 330 415M285 319 335 323M200 343H280M77 270H195M77 280H195M100 319 195 314M140 319 142 393M202 343V372",
  "M45 187 62 340 62 370M63 182 72 270 84 400M82 176 97 280 105 400 118 510M10 205 28 370M60 310H75V330",
  "M335 415 410 435 500 424M330 380 407 385M62 388 200 400M62 388H195M540 707 657 722M555 705 565 688H602L600 708",
  "M612 900 700 920 810 945H930M695 770 735 810 725 825 730 838 745 840 C780 890 800 905 870 890L890 893 908 905M710 770 745 805 819 755M825 765 770 815C758 830 785 866 815 866 850 866 870 835 850 805L830 780",
  "M898 1094V997L970 1000M1025 1096 1035 1070 1050 1085M695 960 697 977 728 985 732 960M475 1070 515 1080M475 1070 455 1130 410 1117 395 1145M468 1102 508 1113",
  "M330 840 325 855 430 890 465 920M497 890 605 905M500 905 580 945 625 950M385 1155 362 1245H328M235 1110 190 1210 163 1293M250 1055 200 1045M250 1055 235 1100",
  "M20 812 100 850 85 890M20 812 0 825M105 897 165 900 190 810M105 897 60 1000 12 1095 105 1108M125 900 100 960 55 1098M143 900 80 1100M240 825 200 930 170 1000M250 827 210 930 185 1010M268 830 225 950 195 1040M150 985 180 997M40 830 0 900M60 840 0 990M0 750 120 790",
  "M40 715 50 740M65 700 80 740M88 690 105 720M75 730 110 755 125 790M130 700 150 780M85 745 90 725 125 710M490 760 560 770M300 830 320 780 375 740M325 835 375 780M565 770V820H612M585 775V820M597 778V822M565 800H612",
  "M120 700 205 725 190 790M480 600 470 680 520 570M505 570H310M465 680 493 682 487 745M250 620 350 700M100 575 190 590M110 515 200 525M130 520 150 560 190 580M108 455 237 465M195 465V520",
  "M390 770 345 740 260 690 250 650M390 790 440 795 490 800M400 815 480 840M310 578H510M430 600 400 740M405 780 485 800M420 820 490 845",
];
const EAST_BOLD = [
  "M37 187 60 370V480L65 595M62 388 200 400 330 415 400 420 460 410M190 370 250 385 300 415 350 450 365 460M0 372H60",
  "M545 760 620 775 700 765 819 750M612 935 700 955 820 973 950 970",
  "M497 820V895L460 920 420 985 390 1060 360 1150M0 735 100 780 200 812 330 840 410 855 480 845 545 850 555 825 500 860 605 885",
  "M350 1165 385 1153M355 1165 335 1210 307 1320M118 710 125 760 148 840 145 900 140 980 105 1110 75 1200 57 1275",
  "M0 595 60 600 170 615M-82 1230 0 1262 57 1275 163 1293 307 1320M235 1110 350 1165M248 700 250 730 246 757M390 740 395 820 408 855M265 690 375 750",
];
const WEST_ROADS = [
  "M633 248 665 305 720 400 820 590 900 745 960 805 1080 905",
  "M800 885 850 845 910 795 940 760 985 745 1022 725 1080 695",
  "M1022 730 1005 790 990 850",
];
const EAST_ROADS = [
  "M190 603 260 600 300 560 340 500 400 460 500 450 512 458 520 570 543 757",
  "M422 280 410 380 407 460M547 762 630 770 655 745 667 597M619 780 612 920 718 1103",
  "M0 845 60 905 130 970 235 1095Q290 1145 360 1150M0 720 60 690 130 650 190 605M440 745 540 760",
];
const HATCHED = [
  "M490 760 562 768 556 825 488 818z",
  "M335 380 372 385 362 410 335 403z",
  "M63 330H75V348H63zM87 330H99V370H87z",
  "M552 710 570 708 568 732 550 730zM575 722 602 722V733H575z",
  "M733 770 768 763 771 775 737 778z",
  "M150 640 175 655 160 680 135 665zM246 432 262 435 258 458 244 455zM222 670 235 690 228 705z",
];

type Row = [number, number, number, number, number, number];

/* x1, y1, x2, y2, number of plots, depth of each plot */
const ROWS: Row[] = [
  [112, 408, 238, 424, 17, 14], [112, 424, 238, 440, 18, 14], [135, 443, 240, 453, 14, 10],
  [75, 395, 76, 450, 4, 12], [80, 490, 82, 600, 7, 16], [240, 460, 365, 465, 11, 15],
  [240, 495, 325, 500, 8, 18], [250, 525, 320, 535, 8, 16], [190, 530, 195, 595, 5, 12],
  [240, 540, 270, 610, 6, 14], [350, 500, 352, 650, 12, 13], [372, 490, 374, 640, 13, 12],
  [392, 475, 392, 640, 13, 12], [415, 465, 408, 640, 16, 11], [438, 465, 428, 640, 17, 10],
  [425, 640, 408, 740, 10, 11], [454, 515, 436, 745, 18, 10], [470, 575, 458, 720, 12, 8],
  [280, 620, 440, 745, 17, 15], [268, 645, 385, 745, 9, 17], [300, 590, 385, 690, 10, 14],
  [385, 650, 380, 800, 12, 13], [85, 580, 190, 605, 9, 14], [115, 625, 165, 635, 4, 10],
  [135, 680, 205, 715, 9, 17], [180, 655, 240, 690, 6, 15], [320, 440, 365, 470, 5, 12],
  [405, 735, 470, 770, 6, 14], [470, 550, 490, 560, 2, 10], [95, 545, 200, 550, 6, 14],
  [605, 780, 605, 820, 2, 8], [410, 770, 412, 810, 2, 14], [140, 740, 185, 760, 4, 16],
  [125, 715, 195, 740, 5, 14], [280, 690, 380, 760, 5, 18], [460, 690, 475, 770, 4, 14],
  [325, 535, 300, 600, 5, 13], [122, 480, 130, 520, 2, 9], [270, 480, 340, 485, 8, 9],
  [280, 540, 310, 500, 4, 10], [205, 530, 240, 600, 7, 12], [250, 560, 285, 580, 4, 10],
  [70, 540, 110, 590, 5, 9], [200, 690, 215, 725, 3, 10], [240, 655, 270, 690, 4, 9],
  [330, 640, 430, 700, 10, 11], [365, 770, 390, 800, 3, 9],
];

function Houses() {
  return (
    <>
      {ROWS.map(([x1, y1, x2, y2, n, w], r) => {
        const a = (Math.atan2(y2 - y1, x2 - x1) * 180) / Math.PI;
        const step = Math.hypot(x2 - x1, y2 - y1) / n;
        let plots = "";
        let black = "";
        for (let i = 0; i < n; i++) {
          const k = (i * 7 + r * 5) % 6;
          const x = Math.round(i * step);
          const s = Math.round(step);
          plots += `M${x} ${-w}h${s}v${2 * w - k}h${-s}zM${x} ${k - 2}h${s}`;
          black += `M${x + 1} ${-w + k}h${s - 3}v${5 + (k % 3)}h${3 - s}z`;
          black += `M${x + 2} ${2 + k}h${s - 3}v${4 + (k % 4)}h${3 - s}z`;
        }
        return (
          <g key={r} transform={`translate(${x1} ${y1}) rotate(${a})`}>
            <path d={plots} strokeWidth="3" />
            <path d={black} fill="#000" strokeWidth="1" />
            <path d={`M${Math.round(step)} ${3 - w}l4 3M${Math.round(step * 3)} 5l4 3`} stroke={r % 2 ? "#d11" : "#3a9d12"} strokeWidth="3" />
          </g>
        );
      })}
    </>
  );
}

function MapCanvas() {
  const field: number[] = [0, 1, 2, 3, 4, 5, 6, 7, 8, 9];
  return (
    <main className="min-h-0 flex-1 overflow-hidden border border-[#d8ccb8] bg-white">
      <svg viewBox="188 526 1490 445" className="h-full w-full" role="img" aria-label="Cadastral map" fill="none" stroke="#000" strokeLinejoin="round">
        <defs>
          <pattern id="hatch-map" width="27" height="27" patternUnits="userSpaceOnUse">
            <path d="M0 0h27v27H0z" fill="#fff" stroke="none" />
            <path d="m0 0 27 27" stroke="#e01515" strokeWidth="3" />
            <path d="M27 0 0 27" stroke="#55a318" strokeWidth="3" />
          </pattern>
        </defs>
        <g transform="translate(580 520) scale(.33333)">
          {WEST_ROADS.map((d) => <path key={d} d={d} strokeWidth="12" />)}
          {WEST_ROADS.map((d) => <path key={d} d={d} strokeWidth="5" stroke="#fff" />)}
          <path d={WEST_THIN.join("")} strokeWidth="3.300" />
          <path d={WEST_BOLD.join("")} strokeWidth="5.500" />
          <path d="M36 583 75 594 130 602 250 605 470 604 560 609 640 618 740 614 830 608 920 599 1080 602M430 666 530 649 590 638" strokeWidth="3" />
          <path d="M870 878 882 876 884 892 872 894zM895 870 906 872 904 888 893 884zM930 852 952 850 955 862 932 866zM697 885 708 895 702 905zM750 908 762 906 758 916zM662 930 675 928 672 936zM660 244H670V255H660zM703 905 713 906 712 915 704 914zM982 812 992 808 994 820 984 822z" strokeWidth="5" />
          <path d="M664 250v3M755 911h3M878 882v6M900 874v5M940 857h5" stroke="#c22" strokeWidth="3" />
        </g>
        <g transform="translate(920 520) scale(.33333)">
          <path d={EAST_THIN.join("")} strokeWidth="3.300" />
          <Houses />
          {EAST_ROADS.map((d) => <path key={d} d={d} strokeWidth="12" />)}
          {EAST_ROADS.map((d) => <path key={d} d={d} strokeWidth="4" stroke="#fff" />)}
          <path d="M260 615 350 670 440 745" strokeWidth="9" />
          <path d="M260 615 350 670 440 745" strokeWidth="2" stroke="#fff" />
          <path d="M170 632 200 602 255 603 273 625 262 645 225 655 205 665z" fill="#fff" stroke="#fff" />
          <path d="M205 612 222 608 222 626 207 628zM234 630H241V636H234zM215 660 220 645 232 650" strokeWidth="3" />
          <path d={EAST_BOLD.join("")} strokeWidth="5.500" />
          <path d="M605 925 560 990 535 1040 505 1132" strokeWidth="9" />
          {field.map((i) => (
            <path key={i} d={`M${185 - i * 2} ${1218 + i * 7} L${326 - i * 2} ${1245 + i * 7}`} strokeWidth="3" />
          ))}
          <path d="M175 1020 230 1110" strokeWidth="8" />
          {HATCHED.map((d) => <path key={d} d={d} fill="url(#hatch-map)" strokeWidth="3" />)}
          <path d="M515 785 525 782 523 808 513 806zM600 762H620V770H600zM706 962H724V974H706zM455 460H465V468H455zM562 778H570V820H562z" strokeWidth="4" />
        </g>
      </svg>
    </main>
  );
}

/* ---------- window ---------- */

const MENU: [string, string, string][] = [
  ["", "S", "oubor"], ["", "E", "ditovat"], ["", "Z", "obrazit"], ["", "V", "rstva"], ["", "N", "astavení"],
  ["Zásuvné ", "m", "oduly"], ["Vekt", "o", "r"], ["", "R", "astr"], ["", "N", "ápověda"],
];

function StatusBar() {
  return (
    <footer className="flex h-[30px] shrink-0 items-center justify-end border-t border-[#ddd3bf] pr-[2px] font-['Liberation_Sans',sans-serif] whitespace-nowrap">
      <button type="button" aria-label="Toggle extents" className="size-[18px] rounded-[3px] border border-[#9a8f7c] bg-[#bdb2a0]">
        <svg viewBox="0 0 16 16" className="size-4" fill="#eee" stroke="#222" strokeWidth="1.300"><path d="M3 5C2 1 7 1 7 4l1 4c5-1 6 3 4 6-3 2-7 0-7-3zM7 8 13 2" /><circle cx="9" cy="11" r="2" fill="#222" /></svg>
      </button>
      <label htmlFor="coords" className="ml-[10px] w-[79px]">Souřadnice:</label>
      <input id="coords" defaultValue="-755124,-1046529" className="h-[18px] w-[298px] rounded-[3px] border border-[#a0937c] bg-white text-center" />
      <label htmlFor="scale" className="ml-[10px] w-[55px]">Měřítko</label>
      <span className="relative flex h-[18px] w-[97px]">
        <select id="scale" className="w-full appearance-none rounded-[3px] border border-[#a0937c] bg-white pl-[5px] leading-4">
          <option>1:18806</option>
        </select>
        <span className="pointer-events-none absolute inset-y-0 right-0 flex w-[25px] items-center justify-center rounded-r-[3px] border border-[#988c76] bg-gradient-to-b from-[#c6b9a6] to-[#a79a83]">
          <svg viewBox="0 0 8 8" className="size-2"><path d="M.8 1h6.400L4 7z" fill="#8a8780" stroke="#5a574f" /></svg>
        </span>
      </span>
      <button type="button" aria-label="Stop rendering" className="ml-2 size-[18px] rounded-[3px] border border-[#9a8f7c] bg-[#b9ae9b]">
        <svg viewBox="0 0 16 16" className="size-4" fill="none"><path d="M15 4 10 11c0 4-4 4-7 4 2-2 1-5 4-5l7-7z" fill="#8f8b84" stroke="#77736b" /><circle cx="6" cy="5" r="4" stroke="#d9433a" strokeWidth="1.800" /><path d="m3 2 6 6" stroke="#d9433a" strokeWidth="1.500" /></svg>
      </button>
      <span className="ml-[10px] flex"><Check id="render" /></span>
      <label htmlFor="render" className="ml-2 w-[75px]">Vykreslování</label>
      <span className="ml-4 w-[70px] text-[#a29d93]">EPSG:2065</span>
      <button type="button" aria-label="CRS status" className="ml-[10px] size-[18px] rounded-[3px] border border-[#9a8f7c] bg-[#a1988a]">
        <svg viewBox="0 0 16 16" className="size-4" fill="none" stroke="#6a655c"><circle cx="8" cy="8" r="5.500" fill="#8b857a" /><path d="M8 1v14M1 8h14" /><circle cx="8" cy="8" r="2.500" /></svg>
      </button>
      <button type="button" aria-label="Messages" className="ml-2 size-[18px] rounded-[3px] border border-[#cfc4ad] bg-white">
        <svg viewBox="0 0 16 16" className="size-4"><path d="m8 2 6.500 12h-13z" fill="#ffee00" stroke="#8a8200" strokeLinejoin="round" /><path d="M8 6v4M8 11.500V13" stroke="#000" strokeWidth="1.500" /></svg>
      </button>
    </footer>
  );
}

export default function App() {
  return (
    <div className="flex h-screen flex-col overflow-hidden bg-[#efebe3] font-['DejaVu_Sans',sans-serif] text-[13px] leading-4 text-[#3c3b37]">
      <header className="shrink-0 bg-[#3c3b37] text-[#dfdbd2]">
        <div className="flex h-7 items-center justify-between border-t border-[#6b6150] bg-gradient-to-b from-[#5a5852] to-[#3c3b37] to-50% pr-[11px] pl-[22px]">
          <h1 className="font-bold">Quantum GIS 08e6c37</h1>
          <span className="flex h-[18px] items-center gap-[5px] rounded-full border-b border-[#777569] bg-[#2a2926] px-[2px]">
            <button type="button" aria-label="Minimize" className="size-[15px]"><svg viewBox="0 0 15 15" fill="none"><circle cx="7.500" cy="7.500" r="7" fill="#edebe5" /><path d="m4 6 3.500 3.500L11 6" stroke="#66635c" strokeWidth="1.600" /></svg></button>
            <button type="button" aria-label="Maximize" className="size-[15px]"><svg viewBox="0 0 15 15" fill="none"><circle cx="7.500" cy="7.500" r="7" fill="#edebe5" /><path d="M5 5h5v5H5z" stroke="#66635c" strokeWidth="1.400" /></svg></button>
            <button type="button" aria-label="Close window" className="size-[15px]"><svg viewBox="0 0 15 15" fill="none"><circle cx="7.500" cy="7.500" r="7" fill="#ee6b43" /><path d="m5 5 5 5M10 5l-5 5" stroke="#55291c" strokeWidth="1.500" /></svg></button>
          </span>
        </div>
        <nav aria-label="Menu" className="flex h-[22px] items-center gap-[13px] pb-px pl-[6px]">
          {MENU.map(([a, b, c]) => (
            <button key={a + b + c} type="button" className="whitespace-pre">
              {a}<span className="underline underline-offset-2">{b}</span>{c}
            </button>
          ))}
        </nav>
      </header>
      <MainToolbar />
      <div className="flex min-h-0 flex-1">
        <LeftDock />
        <div className="flex min-w-0 flex-1 flex-col">
          <VfkDock />
          <MapCanvas />
        </div>
      </div>
      <StatusBar />
    </div>
  );
}
